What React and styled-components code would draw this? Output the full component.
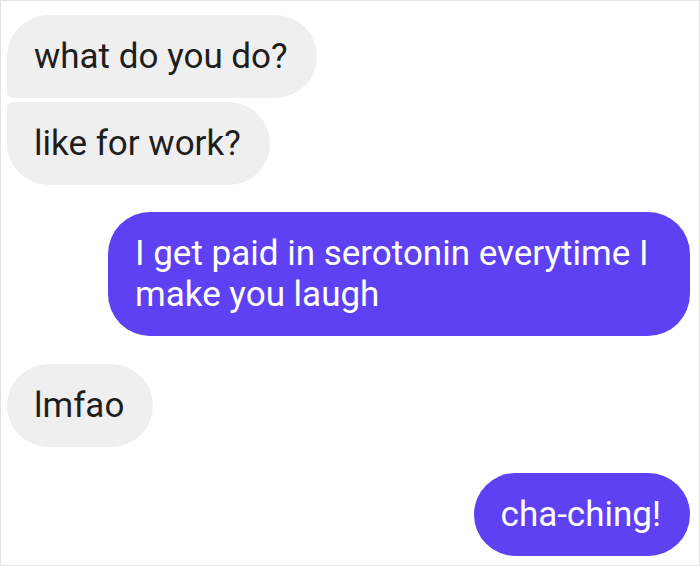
import React from "react";
import styled, { createGlobalStyle } from "styled-components";

const GlobalStyle = createGlobalStyle`
  html, body {
    margin: 0;
    padding: 0;
    background: #ffffff;
  }
  body {
    font-family: Roboto, "Liberation Sans", sans-serif;
  }
`;

const messages = [
  { id: 1, mine: false, text: "what do you do?", gap: 0, corner: "first" },
  { id: 2, mine: false, text: "like for work?", gap: 4, corner: "last" },
  { id: 3, mine: true, text: "I get paid in serotonin everytime I make you laugh", gap: 27 },
  { id: 4, mine: false, text: "lmfao", gap: 28 },
  { id: 5, mine: true, text: "cha-ching!", gap: 26 },
];

const radiusFor = (corner) => {
  // grouped bubbles get a tight corner where they touch
  if (corner === "first") return "42px 42px 42px 6px";
  if (corner === "last") return "6px 42px 42px 42px";
  return "42px";
};

const App = () => {
  return (
    <>
      <GlobalStyle />
      <ChatFrame>
        {messages.map((m) => (
          <Row key={m.id} $mine={m.mine} $gap={m.gap}>
            <Bubble $mine={m.mine} $radius={radiusFor(m.corner)}>
              {m.text}
            </Bubble>
          </Row>
        ))}
      </ChatFrame>
    </>
  );
};

const ChatFrame = styled.div`
  box-sizing: border-box;
  width: 700px;
  height: 566px;
  border: 1px solid #e2e2e2;
  padding: 14px 9px 0 6px;
  display: flex;
  flex-direction: column;
  background: #ffffff;
  overflow: hidden;
`;

const Row = styled.div`
  display: flex;
  justify-content: ${(p) => (p.$mine ? "flex-end" : "flex-start")};
  margin-top: ${(p) => p.$gap}px;
`;

const Bubble = styled.div`
  box-sizing: border-box;
  max-width: 582px;
  padding: 21px 29px 21px 27px;
  border-radius: ${(p) => p.$radius};
  background: ${(p) => (p.$mine ? "#5d41f3" : "#efefef")};
  color: ${(p) => (p.$mine ? "#ffffff" : "#1e1e1e")};
  font-family: Roboto, "Liberation Sans", sans-serif;
  font-size: 35px;
  line-height: 41px;
`;

export default App;
